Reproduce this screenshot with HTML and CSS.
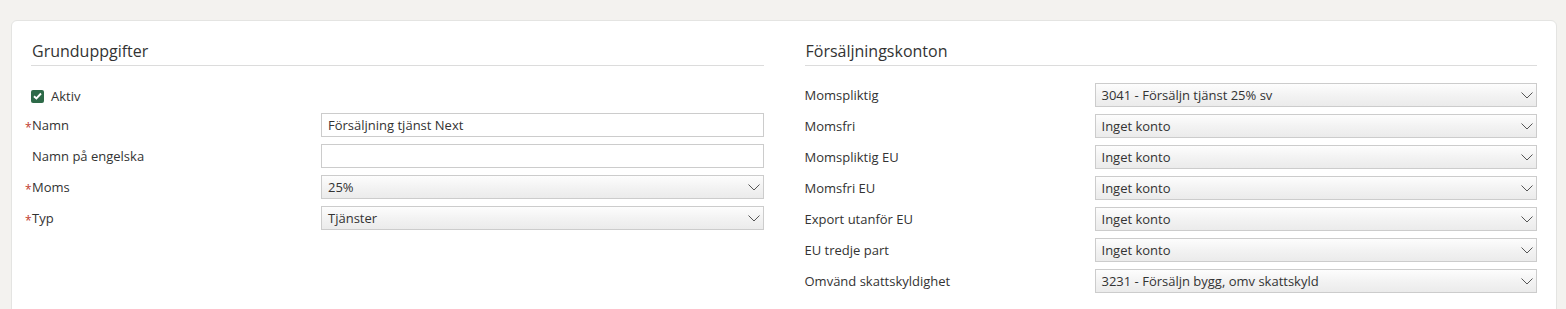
FILE: index.html
```html
<!DOCTYPE html>
<html lang="sv">
<head>
    <meta charset="UTF-8">
    <title>Artikel</title>
    <link rel="stylesheet" href="styles.css">
</head>
<body>
    <div class="card">
        <div class="section">
            <h2 class="section-title">Grunduppgifter</h2>
            <div class="check-row">
                <span class="checkbox">
                    <svg width="9" height="8" viewBox="0 0 9 8"><path d="M1 4.2 L3.4 6.5 L8 1.5" fill="none" stroke="#fff" stroke-width="1.9"/></svg>
                </span>
                <span class="check-label">Aktiv</span>
            </div>
            <div class="form-row">
                <label class="field-label"><span class="req">*</span>Namn</label>
                <div class="input">Försäljning tjänst Next</div>
            </div>
            <div class="form-row">
                <label class="field-label">Namn på engelska</label>
                <div class="input"></div>
            </div>
            <div class="form-row">
                <label class="field-label"><span class="req">*</span>Moms</label>
                <div class="select"><span>25%</span><svg class="chev" width="12" height="7" viewBox="0 0 12 7"><path d="M0.5 0.5 L6 6 L11.5 0.5" fill="none" stroke="#555" stroke-width="1"/></svg></div>
            </div>
            <div class="form-row">
                <label class="field-label"><span class="req">*</span>Typ</label>
                <div class="select"><span>Tjänster</span><svg class="chev" width="12" height="7" viewBox="0 0 12 7"><path d="M0.5 0.5 L6 6 L11.5 0.5" fill="none" stroke="#555" stroke-width="1"/></svg></div>
            </div>
        </div>

        <div class="section">
            <h2 class="section-title">Försäljningskonton</h2>
            <div class="form-list">
                <div class="form-row">
                    <label class="field-label">Momspliktig</label>
                    <div class="select"><span>3041 - Försäljn tjänst 25% sv</span><svg class="chev" width="12" height="7" viewBox="0 0 12 7"><path d="M0.5 0.5 L6 6 L11.5 0.5" fill="none" stroke="#555" stroke-width="1"/></svg></div>
                </div>
                <div class="form-row">
                    <label class="field-label">Momsfri</label>
                    <div class="select"><span>Inget konto</span><svg class="chev" width="12" height="7" viewBox="0 0 12 7"><path d="M0.5 0.5 L6 6 L11.5 0.5" fill="none" stroke="#555" stroke-width="1"/></svg></div>
                </div>
                <div class="form-row">
                    <label class="field-label">Momspliktig EU</label>
                    <div class="select"><span>Inget konto</span><svg class="chev" width="12" height="7" viewBox="0 0 12 7"><path d="M0.5 0.5 L6 6 L11.5 0.5" fill="none" stroke="#555" stroke-width="1"/></svg></div>
                </div>
                <div class="form-row">
                    <label class="field-label">Momsfri EU</label>
                    <div class="select"><span>Inget konto</span><svg class="chev" width="12" height="7" viewBox="0 0 12 7"><path d="M0.5 0.5 L6 6 L11.5 0.5" fill="none" stroke="#555" stroke-width="1"/></svg></div>
                </div>
                <div class="form-row">
                    <label class="field-label">Export utanför EU</label>
                    <div class="select"><span>Inget konto</span><svg class="chev" width="12" height="7" viewBox="0 0 12 7"><path d="M0.5 0.5 L6 6 L11.5 0.5" fill="none" stroke="#555" stroke-width="1"/></svg></div>
                </div>
                <div class="form-row">
                    <label class="field-label">EU tredje part</label>
                    <div class="select"><span>Inget konto</span><svg class="chev" width="12" height="7" viewBox="0 0 12 7"><path d="M0.5 0.5 L6 6 L11.5 0.5" fill="none" stroke="#555" stroke-width="1"/></svg></div>
                </div>
                <div class="form-row">
                    <label class="field-label">Omvänd skattskyldighet</label>
                    <div class="select"><span>3231 - Försäljn bygg, omv skattskyld</span><svg class="chev" width="12" height="7" viewBox="0 0 12 7"><path d="M0.5 0.5 L6 6 L11.5 0.5" fill="none" stroke="#555" stroke-width="1"/></svg></div>
                </div>
            </div>
        </div>
    </div>
</body>
</html>
```

FILE: styles.css
```css
* {
    margin: 0;
    padding: 0;
    box-sizing: border-box;
}

body {
    font-family: 'Open Sans', 'Liberation Sans', Arial, sans-serif;
    font-size: 13px;
    color: #333333;
    background: #f3f2ef;
    padding: 20px 9px 0 11px;
    overflow: hidden;
}

.card {
    background: #ffffff;
    border: 1px solid #e4e4e2;
    border-radius: 6px;
    padding: 19px 19px 30px;
    display: grid;
    grid-template-columns: 1fr 1fr;
    column-gap: 41px;
}

.section-title {
    font-size: 16px;
    font-weight: normal;
    line-height: 22px;
    color: #333333;
    padding: 0 0 3px 1px;
    border-bottom: 1px solid #dcdcdc;
}

/* checkbox */
.check-row {
    display: flex;
    align-items: center;
    height: 20px;
    margin: 20px 0 7px;
}

.checkbox {
    width: 13px;
    height: 13px;
    border-radius: 2px;
    background: #2d6a48;
    display: flex;
    align-items: center;
    justify-content: center;
    margin-right: 7px;
}

.check-label {
    line-height: 20px;
}

.form-list {
    margin-top: 17px;
}

.form-row {
    display: grid;
    grid-template-columns: 290px 1fr;
    align-items: center;
    margin-bottom: 7px;
}

.field-label {
    line-height: 24px;
}

.section:first-child .field-label {
    padding-left: 1px;
}

.req {
    color: #c0392b;
    font-size: 12px;
    margin-left: -7px;
    display: inline-block;
    width: 7px;
    vertical-align: -2px;
    line-height: 12px;
}

.input,
.select {
    height: 24px;
    border: 1px solid #cccccc;
    padding: 0 7px 0 6px;
    line-height: 22px;
    color: #333333;
    background: #ffffff;
}

.select {
    display: flex;
    align-items: center;
    justify-content: space-between;
    padding-right: 3px;
    background: linear-gradient(to bottom, #fdfdfd 0%, #f3f3f3 50%, #ebebeb 100%);
}

.chev {
    flex-shrink: 0;
}
```
